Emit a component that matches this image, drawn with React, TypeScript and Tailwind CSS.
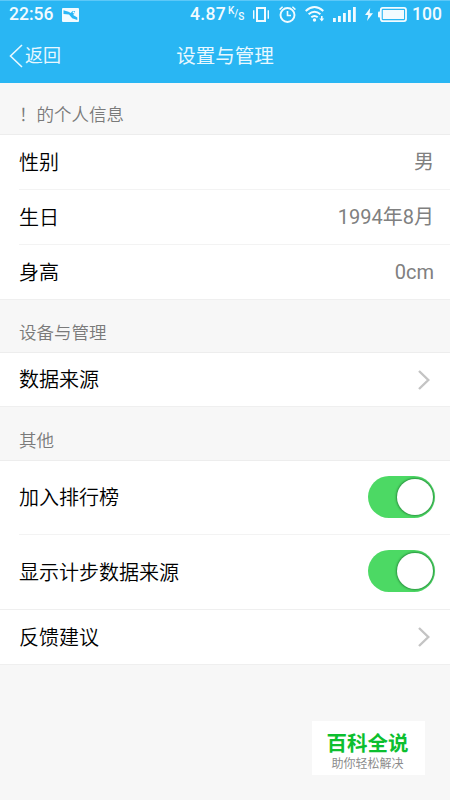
import { useState } from "react";
import type { ReactNode } from "react";

interface RowProps {
    label: string;
    children?: ReactNode;
    height?: string;
    divider?: "inset" | "full" | "none";
}

function BackIcon() {
    return (
        <svg width="14" height="24" viewBox="0 0 14 24" fill="none" stroke="#e8f8ff" strokeWidth="1.6">
            <path d="M13 1 L1.5 12 L13 23" />
        </svg>
    );
}

function ChevronIcon() {
    return (
        <svg className="mr-[4px]" width="12" height="20" viewBox="0 0 12 20" fill="none" stroke="#c4c4c4" strokeWidth="2.4">
            <path d="M1 1 L10.3 10 L1 19" />
        </svg>
    );
}

function PictureIcon() {
    return (
        <svg className="-mt-px ml-[9px]" width="17" height="14" viewBox="0 0 17 14">
            <rect width="17" height="14" rx="1" fill="#f2fbff" />
            <path d="M1.5 2.3 L6.5 3.8 L8.8 5 L10.2 3.2 L13.2 3 L12.2 5.6 L11.2 7 L15.3 9.5 V12 L10.2 10.2 L7 6.6 L1.5 6 Z" fill="#29b6f6" />
            <circle cx="11.6" cy="4.4" r="0.9" fill="#f2fbff" />
        </svg>
    );
}

function VibrateIcon() {
    return (
        <svg className="-mt-[2px] ml-[9px]" width="16" height="15" viewBox="0 0 16 15" fill="none" stroke="#f2fbff">
            <rect x="4" y="1" width="8" height="13" strokeWidth="2" />
            <path d="M0.7 3.2 V11.8 M15.3 3.2 V11.8" strokeWidth="1.4" />
        </svg>
    );
}

function AlarmIcon() {
    return (
        <svg className="-mt-[2px] ml-[10px]" width="17" height="17" viewBox="0 0 17 17" fill="none" stroke="#f2fbff">
            <circle cx="8.5" cy="9" r="7" strokeWidth="1.9" />
            <path d="M8.5 5 V9.5 H12" strokeWidth="1.6" />
            <path d="M0.6 3.6 L3.6 0.8 M16.4 3.6 L13.4 0.8" strokeWidth="1.5" />
        </svg>
    );
}

function WifiIcon() {
    return (
        <svg className="-mt-[2px] ml-[9px]" width="20" height="16" viewBox="0 0 20 16" fill="none" stroke="#f2fbff" strokeWidth="1.9">
            <path d="M0.7 5 Q9.5 -2.8 18.3 5" />
            <path d="M3.6 8.3 Q9.5 3 15.4 8.3" />
            <path d="M6.3 11.3 Q9.5 8.5 12.7 11.3" />
            <circle cx="9.5" cy="14" r="1.7" fill="#f2fbff" stroke="none" />
            <path d="M16 10 H17.6 V12.5 H19.2 L16.8 15.5 L14.3 12.5 H16 Z" fill="#f2fbff" stroke="none" />
        </svg>
    );
}

function SignalIcon() {
    return (
        <svg className="-mt-[2px] ml-[8px]" width="23" height="15" viewBox="0 0 23 15" fill="#f2fbff">
            <rect x="0" y="11" width="2.8" height="4" />
            <rect x="5" y="9" width="2.8" height="6" />
            <rect x="10" y="6" width="2.8" height="9" />
            <rect x="15" y="3" width="2.8" height="12" />
            <rect x="20" y="0" width="2.8" height="15" />
        </svg>
    );
}

function BatteryIcon() {
    return (
        <>
            <svg className="-mt-[2px] ml-[9px]" width="8" height="13" viewBox="0 0 8 13" fill="#f2fbff">
                <path d="M5.2 0 L0 7 H3.3 L2 13 L8 5.2 H4.6 Z" />
            </svg>
            <svg className="-mt-[2px] ml-[5px]" width="29" height="15" viewBox="0 0 29 15">
                <rect x="2.8" y="0.9" width="25.2" height="13.2" rx="2" fill="none" stroke="#f2fbff" strokeWidth="1.8" />
                <rect x="4.8" y="3" width="21.2" height="9" fill="#f2fbff" />
                <rect x="0" y="4.5" width="2.5" height="6" rx="1" fill="#f2fbff" />
            </svg>
        </>
    );
}

function StatusBar() {
    return (
        <div className="flex h-[28px] items-center pl-[9px] font-[Roboto] text-[17.5px] font-medium text-[#f2fbff]">
            <span className="w-[44px] leading-none">22:56</span>
            <PictureIcon />
            <div className="ml-[111px] flex w-[54px] items-center leading-none">
                <span className="w-[36px] tracking-[0.3px]">4.87</span>
                <span className="ml-[2px] flex text-[10px] leading-none">
                    <span className="-mt-[3px]">K</span>
                    <span>/</span>
                    <span className="mt-[3px]">S</span>
                </span>
            </div>
            <VibrateIcon />
            <AlarmIcon />
            <WifiIcon />
            <SignalIcon />
            <BatteryIcon />
            <span className="ml-[5px] leading-none">100</span>
        </div>
    );
}

function Toggle({ defaultOn = true }: { defaultOn?: boolean }) {
    const [on, setOn] = useState(defaultOn);

    return (
        <button
            type="button"
            role="switch"
            aria-checked={on}
            onClick={() => setOn(!on)}
            className={`-mr-px mb-[2px] flex h-[42px] w-[67px] items-center rounded-full px-[2px] ${on ? "justify-end bg-[#4cd964]" : "justify-start bg-[#e5e5e5]"}`}
        >
            <span className="h-[36px] w-[36px] rounded-full bg-white shadow-[0px_0px_2px_1px_rgba(0,60,20,0.45)]" />
        </button>
    );
}

function SectionTitle({ children, height = "h-[53px]" }: { children: ReactNode; height?: string }) {
    return (
        <div className={`flex items-end border-b border-[#ededed] pb-[6px] pl-[19px] text-[17.5px] leading-[25px] font-[350] text-[#7a7a7a] ${height}`}>
            {children}
        </div>
    );
}

function Row({ label, children, height = "h-[55px]", divider = "inset" }: RowProps) {
    return (
        <div className={`flex flex-col bg-white ${height}`}>
            <div className="flex flex-1 items-center justify-between pr-[16px] pl-[19px]">
                <span className="pt-px text-[20px] font-[350] text-black">{label}</span>
                <div className="flex items-center text-[20px] text-[#808080]">{children}</div>
            </div>
            {divider === "inset" && <div className="ml-[19px] h-px bg-[#f3f3f3]" />}
            {divider === "full" && <div className="h-px bg-[#efefef]" />}
        </div>
    );
}

export default function App() {
    return (
        <div className="relative h-[800px] w-[450px] overflow-hidden bg-[#f7f7f7] font-[Roboto,'Noto_Sans_CJK_SC',sans-serif]">
            <header className="h-[83px] border-t border-[#5cc8f8] bg-[#29b6f3]">
                <StatusBar />
                <div className="grid h-[53px] grid-cols-3 items-center text-[#e8f8ff]">
                    <div className="flex items-center gap-[2px] pl-[9px] text-[18px]">
                        <BackIcon />
                        <span>返回</span>
                    </div>
                    <h1 className="pt-[2px] text-center text-[19.5px]">设置与管理</h1>
                </div>
            </header>

            <SectionTitle height="h-[52px]">！的个人信息</SectionTitle>
            <Row label="性别">男</Row>
            <Row label="生日">1994年8月</Row>
            <Row label="身高" divider="full">0cm</Row>

            <SectionTitle>设备与管理</SectionTitle>
            <Row label="数据来源" height="h-[54px]" divider="full">
                <ChevronIcon />
            </Row>

            <SectionTitle height="h-[54px]">其他</SectionTitle>
            <Row label="加入排行榜" height="h-[74px]">
                <Toggle />
            </Row>
            <Row label="显示计步数据来源" height="h-[75px]" divider="full">
                <Toggle />
            </Row>
            <Row label="反馈建议" height="h-[55px]" divider="full">
                <ChevronIcon />
            </Row>

            <div className="absolute top-[721px] left-[312px] flex h-[54px] w-[113px] flex-col items-center bg-white pt-[9px] pr-[2px]">
                <span className="text-[20.5px] leading-[28px] font-bold text-[#0dbf2f]">百科全说</span>
                <span className="text-[12px] leading-[13px] text-[#8c8c8c]">助你轻松解决</span>
            </div>
        </div>
    );
}
